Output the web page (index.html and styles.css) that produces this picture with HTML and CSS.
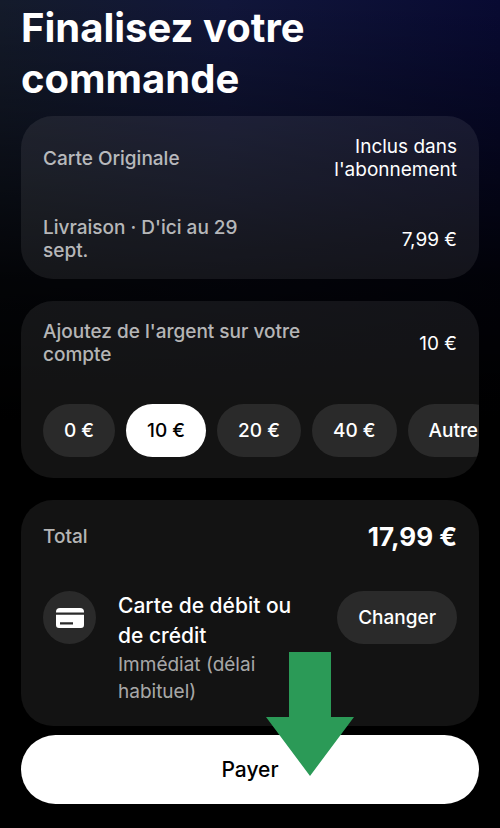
FILE: index.html
```html
<!DOCTYPE html>
<html lang="fr">
<head>
	<meta charset="utf-8">
	<meta name="viewport" content="width=device-width, initial-scale=1">
	<title>Finalisez votre commande</title>
	<link rel="stylesheet" href="styles.css">
</head>
<body>
<main class="checkout">
	<h1 class="title">Finalisez votre commande</h1>

	<section class="card card-compact">
		<div class="row">
			<span class="label">Carte Originale</span>
			<span class="value">Inclus dans l'abonnement</span>
		</div>
		<div class="row">
			<span class="label label-short">Livraison · D'ici au 29 sept.</span>
			<span class="value">7,99 €</span>
		</div>
	</section>

	<section class="card">
		<div class="row">
			<span class="label">Ajoutez de l'argent sur votre compte</span>
			<span class="value">10 €</span>
		</div>
		<div class="chips">
			<button type="button" class="chip">0 €</button>
			<button type="button" class="chip active">10 €</button>
			<button type="button" class="chip">20 €</button>
			<button type="button" class="chip">40 €</button>
			<button type="button" class="chip">Autre</button>
		</div>
	</section>

	<section class="card">
		<div class="row">
			<span class="label">Total</span>
			<strong class="total">17,99 €</strong>
		</div>
		<div class="method">
			<span class="method-icon">
				<svg width="28" height="20" viewBox="0 0 28 20" aria-hidden="true">
					<path fill="#fff" d="M0 4.5V4a4 4 0 0 1 4-4h20a4 4 0 0 1 4 4v.5z"/>
					<path fill="#fff" fill-rule="evenodd" d="M0 6.8h28V17a3 3 0 0 1-3 3H3a3 3 0 0 1-3-3zM4 14.2v2.3h13v-2.3z"/>
				</svg>
			</span>
			<div class="method-text">
				<p class="method-name">Carte de débit ou de crédit</p>
				<p class="method-delay">Immédiat (délai habituel)</p>
			</div>
			<button type="button" class="chip">Changer</button>
		</div>
	</section>

	<div class="footer">
		<button type="button" class="pay">Payer</button>
		<!-- flèche vers le bouton -->
		<svg class="arrow" width="88" height="124" viewBox="0 0 88 124" aria-hidden="true">
			<path fill="#2b9a57" d="M23 0h42v65h23L44 124 0 65h23z"/>
		</svg>
	</div>
</main>
</body>
</html>
```

FILE: styles.css
```css
* {
	box-sizing: border-box;
	margin: 0;
	padding: 0;
}

body {
	background:
		linear-gradient(to bottom, rgba(0, 0, 0, 0) 0, rgba(0, 0, 0, 0.35) 120px, rgba(0, 0, 0, 0.85) 280px, #000 420px),
		linear-gradient(to right, #141b2b 0, #11163a 45%, #080a32 100%);
	background-color: #000;
	background-repeat: no-repeat;
	color: #fff;
	font-family: Inter, "Liberation Sans", sans-serif;
	font-size: 19px;
	line-height: 23px;
}

button {
	border: 0;
	font-family: inherit;
	cursor: pointer;
}

.checkout {
	padding: 2px 21px 24px;
}

.title {
	margin-bottom: 12px;
	font-size: 40px;
	font-weight: 700;
	line-height: 51px;
}

.card {
	display: flex;
	flex-direction: column;
	gap: 38px;
	margin-bottom: 22px;
	padding: 19px 22px 21px;
	border-radius: 32px;
	background: rgba(255, 255, 255, 0.075);
	overflow: hidden;
}

.card-compact {
	gap: 35px;
	padding-bottom: 17px;
}

.row {
	display: flex;
	align-items: center;
	justify-content: space-between;
	min-height: 34px;
}

.label {
	max-width: 70%;
	color: rgba(255, 255, 255, 0.7);
	font-weight: 500;
}

.label-short {
	max-width: 55%;
}

.value {
	max-width: 40%;
	text-align: right;
}

.total {
	font-size: 26px;
	font-weight: 700;
}

/* la liste défile et sort de la carte à droite */
.chips {
	display: flex;
	gap: 11px;
	margin-right: -22px;
	overflow-x: auto;
	scrollbar-width: none;
}

.chip {
	flex: none;
	height: 53px;
	padding: 0 21px;
	border-radius: 27px;
	background: #2a2a2a;
	color: #fff;
	font-size: 19px;
	font-weight: 500;
}

.active {
	background: #fff;
	color: #000;
}

.method {
	display: flex;
	align-items: flex-start;
}

.method-icon {
	display: flex;
	flex: none;
	align-items: center;
	justify-content: center;
	width: 53px;
	height: 53px;
	margin-right: 22px;
	border-radius: 50%;
	background: #2a2a2a;
}

.method-text {
	flex: 1;
	margin-right: 36px;
}

.method-name {
	font-size: 21px;
	font-weight: 500;
	line-height: 30px;
}

.method-delay {
	color: rgba(255, 255, 255, 0.65);
	line-height: 27px;
}

.footer {
	position: relative;
	margin-top: -13px;
}

.pay {
	display: block;
	width: 100%;
	height: 69px;
	border-radius: 35px;
	background: #fff;
	color: #000;
	font-size: 21px;
	font-weight: 500;
}

.arrow {
	position: absolute;
	bottom: 28px;
	left: calc(50% + 16px);
	pointer-events: none;
}
```
